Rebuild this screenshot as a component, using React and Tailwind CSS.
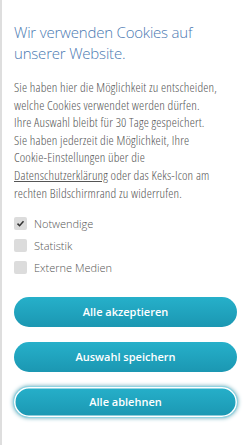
import React, { useState } from 'react';

const options = [
  { id: 'necessary', label: 'Notwendige', locked: true },
  { id: 'stats', label: 'Statistik' },
  { id: 'media', label: 'Externe Medien' },
];

const Check = ({ checked }) => (
  <span className="flex h-[13px] w-[13px] items-center justify-center rounded-[2px] bg-[#dcdcdc]">
    {checked && (
      <svg viewBox="0 0 12 12" className="h-[9px] w-[9px]">
        <path d="M2 6.2 L4.8 9 L10 3" fill="none" stroke="#333" strokeWidth="2" />
      </svg>
    )}
  </span>
);

const CookieButton = ({ children, focused }) => (
  <button
    className={
      'h-[30px] w-full rounded-full bg-gradient-to-b from-[#26b0ca] to-[#1b97b2] text-[11px] font-semibold text-white ' +
      (focused ? 'shadow-[inset_0_0_0_1.5px_#ffffff,0_0_0_1px_#8fd3e2,0_0_4px_1px_#64a9b8]' : '')
    }
  >
    {children}
  </button>
);

export default function App() {
  const [selected, setSelected] = useState({ necessary: true });

  return (
    <div className="min-h-[445px] w-[250px] border-l-2 border-[#dedede] bg-white font-['Open_Sans',sans-serif]">
      <div className="pl-[12px] pr-[13px] pt-[22px]">
        <h2 className="whitespace-nowrap text-[15px] font-light leading-[21px] tracking-[-0.2px] text-[#4a79b2]">
          Wir verwenden Cookies auf
          <br />
          unserer Website.
        </h2>
        <p className="mt-[15px] whitespace-nowrap text-[13px] font-light leading-[17.6px] tracking-[0.15px] text-[#555] font-stretch-condensed">
          Sie haben hier die Möglichkeit zu entscheiden,
          <br />
          welche Cookies verwendet werden dürfen.
          <br />
          Ihre Auswahl bleibt für 30 Tage gespeichert.
          <br />
          Sie haben jederzeit die Möglichkeit, Ihre
          <br />
          Cookie-Einstellungen über die
          <br />
          <span className="underline">Datenschutzerklärung</span> oder das Keks-Icon am
          <br />
          rechten Bildschirmrand zu widerrufen.
        </p>
        <div className="mt-[15px] flex flex-col gap-[9px]">
          {options.map((o) => (
            <label
              key={o.id}
              className="flex items-center gap-[7px] text-[11px] font-light leading-[13px] text-[#555]"
              onClick={() => !o.locked && setSelected((s) => ({ ...s, [o.id]: !s[o.id] }))}
            >
              <Check checked={!!selected[o.id]} />
              {o.label}
            </label>
          ))}
        </div>
        <div className="mt-[23px] flex flex-col gap-[15px]">
          <CookieButton>Alle akzeptieren</CookieButton>
          <CookieButton>Auswahl speichern</CookieButton>
          <CookieButton focused>Alle ablehnen</CookieButton>
        </div>
      </div>
    </div>
  );
}
